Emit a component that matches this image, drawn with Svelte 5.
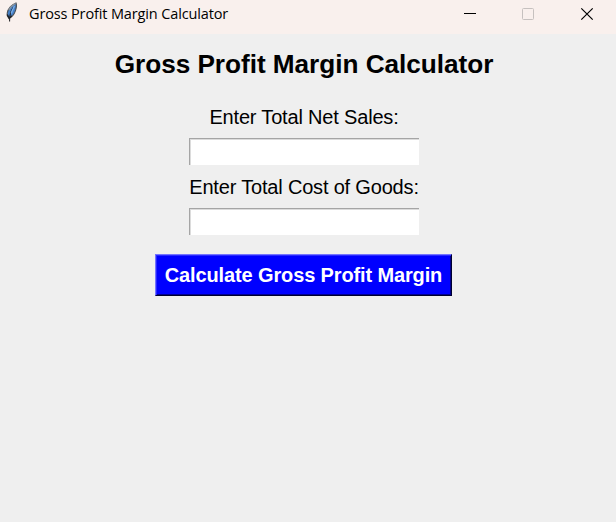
<script>
  let netSales = $state('');
  let cost = $state('');
</script>

<div class="window">
  <header>
    <svg class="feather" width="14" height="22" viewBox="0 0 14 22">
      <path d="M11 3C7 4.600 2.800 8.600 2.200 13.200c-.3 2 .2 3.700 1.600 5 3.200-1 5.400-3.800 6.700-7.600.9-2.600 1.500-5.200.5-7.600z" fill="#4580c8" stroke="#4b5057" stroke-width="1.100" />
      <path d="M10.600 3.400C8.300 4.600 5.400 7 3.800 10" fill="none" stroke="#8d949c" stroke-width="1.200" />
      <path d="M8.800 6.500C6.500 9.500 4.500 13.500 4.600 21.500" fill="none" stroke="#17191d" stroke-width="1" />
      <path d="M9.400 6C8 8.800 7 11.200 6.200 13.500" fill="none" stroke="#78ade9" stroke-width="1.500" />
      <path d="M2.200 14.500l2 3.700 2.500-2.400" fill="none" stroke="#202226" stroke-width="1.500" />
    </svg>
    <span class="title">Gross Profit Margin Calculator</span>
    <svg class="controls" width="140" height="34" viewBox="0 0 140 34">
      <path d="M4 13.500h12" stroke="#000" />
      <rect x="62.500" y="8.500" width="11" height="11" rx="1" fill="none" stroke="#c6c1bf" />
      <path d="M121.300 8.300l11.400 11.400M132.700 8.300l-11.400 11.400" stroke="#000" stroke-width="1.200" />
    </svg>
  </header>
  <main>
    <h1>Gross Profit Margin Calculator</h1>
    <label class="sales" for="sales">Enter Total Net Sales:</label>
    <input id="sales" bind:value={netSales} />
    <label for="cost">Enter Total Cost of Goods:</label>
    <input id="cost" bind:value={cost} />
    <button type="button">Calculate Gross Profit Margin</button>
  </main>
</div>

<style>
  .window {
    width: 616px;
    height: 522px;
    overflow: hidden;
    background: #efefef;
    font-family: "Liberation Sans", Arial, sans-serif;
    color: #000;
  }
  header {
    display: flex;
    height: 34px;
    background: #f9f0ed;
  }
  .feather {
    margin-left: 5px;
    flex: none;
  }
  .title {
    margin-left: 10px;
    font: 14.5px/27px "Open Sans", sans-serif;
    letter-spacing: -0.13px;
    white-space: nowrap;
  }
  .controls {
    margin-left: auto;
    margin-right: 16px;
    flex: none;
  }
  main {
    display: flex;
    flex-direction: column;
    align-items: center;
    width: 608px;
  }
  h1 {
    margin: 15px 0 0;
    font-size: 26.2px;
    line-height: 30px;
    font-weight: 700;
    letter-spacing: -0.04px;
    white-space: nowrap;
  }
  label {
    font-size: 20px;
    line-height: 24px;
    height: 24px;
    margin: 10px 0 9px;
    letter-spacing: -0.18px;
    white-space: nowrap;
  }
  .sales {
    margin-top: 26px;
  }
  input {
    box-sizing: border-box;
    width: 230px;
    height: 27px;
    margin: 0;
    padding: 0 3px;
    border: 0 solid #a5a5a5;
    border-width: 1px 0 0 1px;
    border-radius: 0;
    background: #fff;
    box-shadow: inset 1px 1px #dcdcdc;
    font: 20px "Liberation Sans", sans-serif;
    outline: none;
  }
  button {
    box-sizing: border-box;
    width: 297px;
    height: 42px;
    margin: 19px 1px 0 0;
    padding: 0;
    border: 1px solid;
    border-color: #7474ff #000030 #000030 #7474ff;
    border-radius: 0;
    background: #00f;
    box-shadow: inset 1px 1px #2929ff, inset -1px -1px #000090;
    color: #fff;
    font: 700 20px/38px "Liberation Sans", Arial, sans-serif;
    letter-spacing: -0.13px;
    white-space: nowrap;
  }
</style>
